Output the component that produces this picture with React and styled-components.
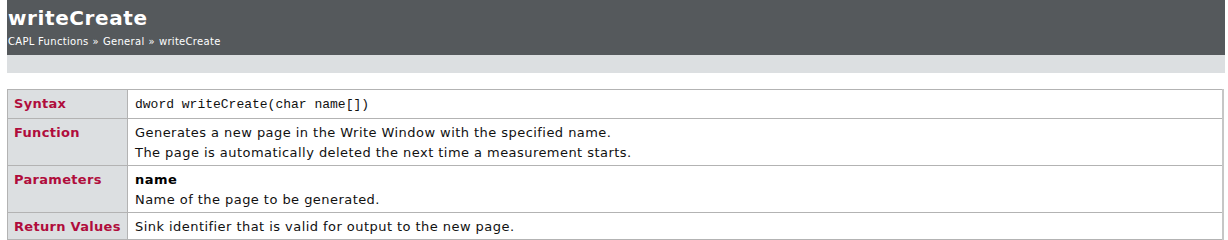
import React from 'react';
import styled, { createGlobalStyle } from 'styled-components';

const GlobalStyle = createGlobalStyle`
  body {
    margin: 0;
    padding: 0 3px 0 7px;
    background: #fff;
    font-family: "DejaVu Sans", Verdana, sans-serif;
  }
`;

const Header = styled.div`
  background-color: #55595c;
  height: 55px;
  padding: 6px 1px 0;
  box-sizing: border-box;
`;

const Title = styled.h1`
  margin: 0;
  color: #fff;
  font-size: 20px;
  font-weight: 700;
  line-height: 24px;
  letter-spacing: 0.6px;
`;

const Crumbs = styled.div`
  color: #fff;
  font-size: 10px;
  line-height: 14px;
  margin-top: 5px;
  letter-spacing: 0.3px;
`;

const Sep = styled.span`
  margin: 0 4px;
`;

const Band = styled.div`
  background-color: #dcdfe1;
  height: 18px;
`;

const Table = styled.table`
  margin-top: 16px;
  width: 1217px;
  border-collapse: collapse;
  border-right: 2px solid #c6c6c6;
  font-size: 13px;
  letter-spacing: 0.45px;
`;

const Label = styled.th`
  width: 107px;
  white-space: nowrap;
  background-color: #dcdfe1;
  color: #b00d3c;
  font-weight: 700;
  text-align: left;
  vertical-align: top;
  padding: 4px 6px 2px;
  border: 1px solid #b3b3b3;
  line-height: 20px;
  letter-spacing: 0.3px;
`;

const Cell = styled.td`
  vertical-align: top;
  padding: 4px 7px 2px;
  border: 1px solid #b3b3b3;
  color: #111;
  line-height: 20px;
`;

const Code = styled.code`
  display: block;
  font-family: "Liberation Mono", "Courier New", monospace;
  font-size: 13px;
  line-height: 22px;
  letter-spacing: 0;
  color: #111;
`;

const Param = styled.div`
  font-weight: 700;
  color: #000;
`;

const rows = [
  {
    label: 'Syntax',
    body: <Code>dword writeCreate(char name[])</Code>,
  },
  {
    label: 'Function',
    body: (
      <>
        Generates a new page in the Write Window with the specified name.
        <br />
        The page is automatically deleted the next time a measurement starts.
      </>
    ),
  },
  {
    label: 'Parameters',
    body: (
      <>
        <Param>name</Param>
        Name of the page to be generated.
      </>
    ),
  },
  {
    label: 'Return Values',
    body: 'Sink identifier that is valid for output to the new page.',
  },
];

const App = () => (
  <>
    <GlobalStyle />
    <Header>
      <Title>writeCreate</Title>
      <Crumbs>
        CAPL Functions<Sep>»</Sep>General<Sep>»</Sep>writeCreate
      </Crumbs>
    </Header>
    <Band />
    <Table>
      <tbody>
        {rows.map((r) => (
          <tr key={r.label}>
            <Label>{r.label}</Label>
            <Cell>{r.body}</Cell>
          </tr>
        ))}
      </tbody>
    </Table>
  </>
);

export default App;
